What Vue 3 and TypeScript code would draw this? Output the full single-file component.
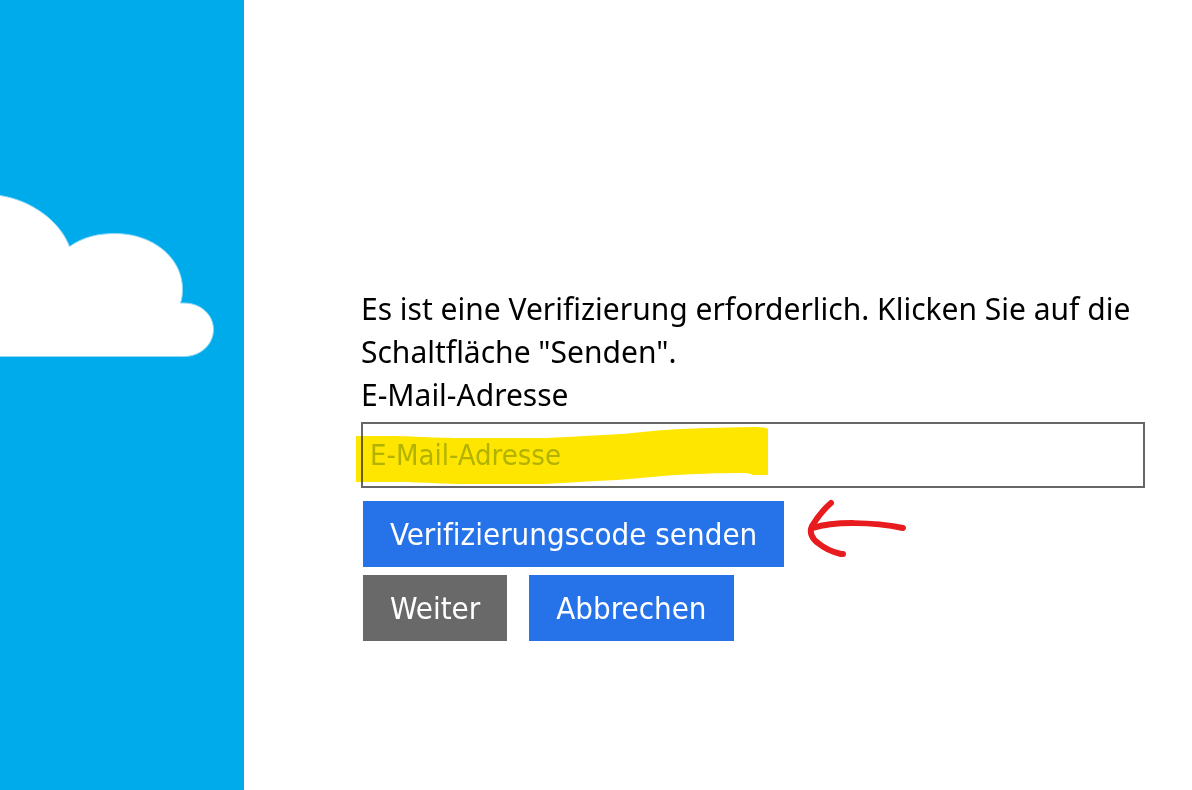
<script setup lang="ts">
import { ref } from 'vue'

const email = ref<string>('')
</script>

<template>
  <div class="page">
    <aside class="banner">
      <svg class="cloud" viewBox="0 0 244 180" aria-hidden="true">
        <path
          d="M-6 15L0 15.500C31 20 60 41 69.500 66.500C83 57 98 53.500 115 53.500C153 53.500 182.500 78 182.500 109C182.500 114 182 119 180.500 123H184C201 123 213.500 135 213.500 149.500C213.500 164 201 176.500 184 176.500H-6Z"
          fill="#fff"
          stroke="#8fd9f7"
          stroke-width="1"
        />
      </svg>
    </aside>
    <main class="content">
      <form class="form" @submit.prevent>
        <p class="message">Es ist eine Verifizierung erforderlich. Klicken Sie auf die Schaltfläche "Senden".</p>
        <label class="label" for="email">E-Mail-Adresse</label>
        <div class="field">
          <input id="email" v-model="email" class="input" type="email" placeholder="E-Mail-Adresse" />
          <svg class="marker" width="414" height="60" viewBox="0 0 414 60" aria-hidden="true">
            <path
              d="M0 10H40C70 11 85 12 110 12H190C220 11 240 9 265 8C290 6 300 4 325 3C350 2 375 1 400 1Q410 1 412 3V49H397Q394 47 388 47C360 47 335 48 320 49C290 51 270 54 240 55C215 56 200 58 180 58H100C70 57 55 56 30 56H0Z"
              fill="#ffe600"
            />
          </svg>
        </div>
        <div class="row">
          <button class="button" type="button">Verifizierungscode senden</button>
          <svg class="arrow" width="104" height="60" viewBox="0 0 104 60" aria-hidden="true">
            <path
              d="M25 2C19 7 11 17 6 25C3 31 6 38 12 42C18 47 26 51 35 53H37M7 27C28 20 67 21 97 27"
              fill="none"
              stroke="#e81c1f"
              stroke-width="6"
              stroke-linecap="round"
              stroke-linejoin="round"
            />
          </svg>
        </div>
        <div class="row actions">
          <button class="button muted" type="submit">Weiter</button>
          <button class="button" type="button">Abbrechen</button>
        </div>
      </form>
    </main>
  </div>
</template>

<style>
body {
  margin: 0;
}
</style>

<style scoped>
.page {
  display: flex;
  min-height: 100vh;
  background: #fff;
  color: #000;
  font-family: "Segoe UI", "Noto Sans", sans-serif;
  font-variant-ligatures: none;
}

.banner {
  flex: 0 0 244px;
  box-sizing: border-box;
  padding-top: 180px;
  background: #00abec;
}

.cloud {
  display: block;
  width: 100%;
}

.content {
  flex: 1;
  min-width: 0;
  box-sizing: border-box;
  padding: 287px 47px 40px 117px;
}

.message {
  margin: 0;
  font-size: 30px;
  line-height: 43px;
}

.label {
  display: block;
  font-size: 30px;
  line-height: 43px;
}

.field {
  position: relative;
  margin-top: 6px;
}

.input {
  display: block;
  width: 100%;
  height: 66px;
  box-sizing: border-box;
  padding: 0 7px;
  border: 2px solid #666;
  border-radius: 0;
  background: #fff;
  color: #000;
  font-family: Tahoma, "DejaVu Sans Condensed", "Noto Sans", sans-serif;
  font-size: 29px;
  outline: none;
}

.input::placeholder {
  color: #b2c6b2;
  opacity: 1;
}

.marker {
  position: absolute;
  top: 4px;
  left: -5px;
  mix-blend-mode: multiply;
  pointer-events: none;
}

.row {
  display: flex;
  align-items: flex-start;
  gap: 22px;
  margin: 13px 0 0 2px;
}

.actions {
  margin-top: 8px;
}

.arrow {
  overflow: visible;
}

.button {
  height: 66px;
  padding: 0 27px;
  border: 0;
  background: #2672e8;
  color: #fff;
  font-family: Tahoma, "DejaVu Sans Condensed", "Noto Sans", sans-serif;
  font-size: 31px;
  font-variant-ligatures: none;
  white-space: nowrap;
}

.muted {
  background: #696969;
}
</style>
